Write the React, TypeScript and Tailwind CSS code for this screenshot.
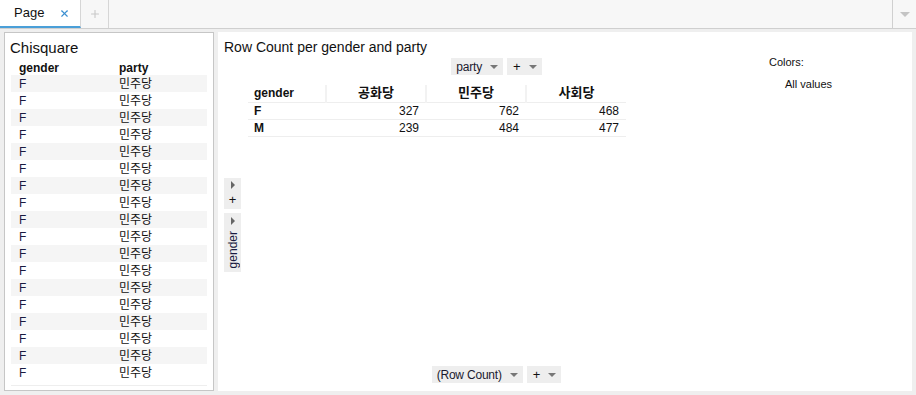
import { Plus, X } from "lucide-react";

const font = { fontFamily: '"Liberation Sans", Arial, "Noto Sans CJK KR", sans-serif' };

const rows = Array.from({ length: 18 }, () => ({ gender: "F", party: "민주당" }));

const pivot = [
  { label: "F", values: [327, 762, 468] },
  { label: "M", values: [239, 484, 477] },
];

const Caret = () => (
  <span className="ml-2 inline-block h-0 w-0 border-x-[4px] border-t-[4px] border-x-transparent border-t-[#777]" />
);

const RightTri = () => (
  <span className="inline-block h-0 w-0 border-y-[4px] border-l-[4px] border-y-transparent border-l-[#666]" />
);

function DropChip({ label }: { label: string }) {
  return (
    <div className="flex h-[17px] items-center bg-[#eeeeee] px-[5px] text-[12px] tracking-[-0.2px] text-[#1a1a2e]">
      {label}
      <Caret />
    </div>
  );
}

function PlusChip() {
  return (
    <div className="flex h-[17px] items-center bg-[#eeeeee] pl-[6px] pr-[5px] text-[13px]">
      +
      <Caret />
    </div>
  );
}

export default function App() {
  return (
    <div className="flex h-[395px] w-[916px] flex-col overflow-hidden bg-[#efefef] text-[#111]" style={font}>
      {/* tab bar */}
      <div className="flex h-[29px] shrink-0 items-stretch border-b border-[#cfcfcf] bg-[#f7f7f7]">
        <div className="flex w-[81px] items-center justify-between border-b-2 border-r border-b-[#4a9fd8] border-r-[#d6d6d6] bg-white pl-[14px] pr-[10px] text-[13px]">
          Page
          <X className="h-[11px] w-[11px] text-[#3b8fd0]" strokeWidth={2.5} />
        </div>
        <div className="flex w-[28px] items-center justify-center border-r border-[#d6d6d6]">
          <Plus className="h-[12px] w-[12px] text-[#c8c8c8]" strokeWidth={2.2} />
        </div>
        <div className="flex-1" />
        <div className="flex w-[24px] items-center justify-center border-l border-[#d0d0d0]">
          <span className="inline-block h-0 w-0 border-x-[5px] border-t-[5px] border-x-transparent border-t-[#c4c4c4]" />
        </div>
      </div>

      {/* content */}
      <div className="flex flex-1 gap-[4px] pb-[4px] pl-[4px] pr-[4px] pt-[3px]">
        {/* left: table */}
        <div className="flex h-[359px] w-[210px] flex-col border border-[#c6c6c6] bg-white">
          <div className="px-[5px] pt-[6px] text-[15px] leading-[18px] text-[#111]">Chisquare</div>
          <div className="mx-[6px] mt-[3px] border-b border-[#eeeeee]">
            <div className="flex h-[15px] items-center text-[12px] font-bold">
              <div className="w-[108px] pl-[8px]">gender</div>
              <div>party</div>
            </div>
            {rows.map((r, i) => (
              <div
                key={i}
                className={`flex h-[17px] items-center text-[12px] ${i % 2 === 0 ? "bg-[#f5f5f5]" : "bg-white"}`}
              >
                <div className="w-[108px] pl-[8px] text-[#1a1a40]">{r.gender}</div>
                <div>{r.party}</div>
              </div>
            ))}
            <div className="h-[4px]" />
          </div>
        </div>

        {/* right: pivot */}
        <div className="flex flex-1 flex-col bg-white pl-[6px]">
          <div className="pt-[7px] text-[14px] leading-[17px] text-[#111]">Row Count per gender and party</div>
          <div className="flex flex-1">
            <div className="grid flex-1 grid-cols-[17px_1fr] grid-rows-[auto_1fr_auto]">
              <div className="col-span-2 mt-[2px] flex justify-center gap-[4px]">
                <DropChip label="party" />
                <PlusChip />
              </div>

              <div className="flex flex-col justify-center gap-[4px] pt-[8px]">
                <div className="flex h-[31px] flex-col items-center justify-between bg-[#eeeeee] py-[3px]">
                  <RightTri />
                  <span className="text-[13px] leading-[13px]">+</span>
                </div>
                <div className="flex h-[59px] flex-col items-center bg-[#eeeeee] pt-[4px]">
                  <RightTri />
                  <span className="mt-[6px] rotate-180 text-[12px] leading-[12px] text-[#1a1a40] [writing-mode:vertical-rl]">
                    gender
                  </span>
                </div>
              </div>

              <div className="pl-[7px] pt-[10px]">
                <table className="border-collapse text-[12px] leading-[16px]">
                  <thead>
                    <tr className="h-[17px] border-b border-[#eeeeee]">
                      <th className="w-[78px] p-0 pl-[6px] text-left font-bold">gender</th>
                      {["공화당", "민주당", "사회당"].map((h) => (
                        <th key={h} className="w-[100px] border-l-2 border-[#f2f2f2] p-0 text-center text-[13px] font-bold">
                          {h}
                        </th>
                      ))}
                    </tr>
                  </thead>
                  <tbody>
                    {pivot.map((r) => (
                      <tr key={r.label} className="h-[17px] border-b border-[#eeeeee]">
                        <td className="p-0 pl-[6px] font-bold">{r.label}</td>
                        {r.values.map((v, i) => (
                          <td key={i} className="p-0 pr-[7px] text-right">
                            {v}
                          </td>
                        ))}
                      </tr>
                    ))}
                  </tbody>
                </table>
              </div>

              <div className="col-span-2 mb-[8px] flex justify-center gap-[4px]">
                <DropChip label="(Row Count)" />
                <PlusChip />
              </div>
            </div>

            <div className="w-[143px] text-[11px]">
              <div className="leading-[13px]">Colors:</div>
              <div className="mt-[9px] pl-[16px] leading-[13px]">All values</div>
            </div>
          </div>
        </div>
      </div>
    </div>
  );
}
